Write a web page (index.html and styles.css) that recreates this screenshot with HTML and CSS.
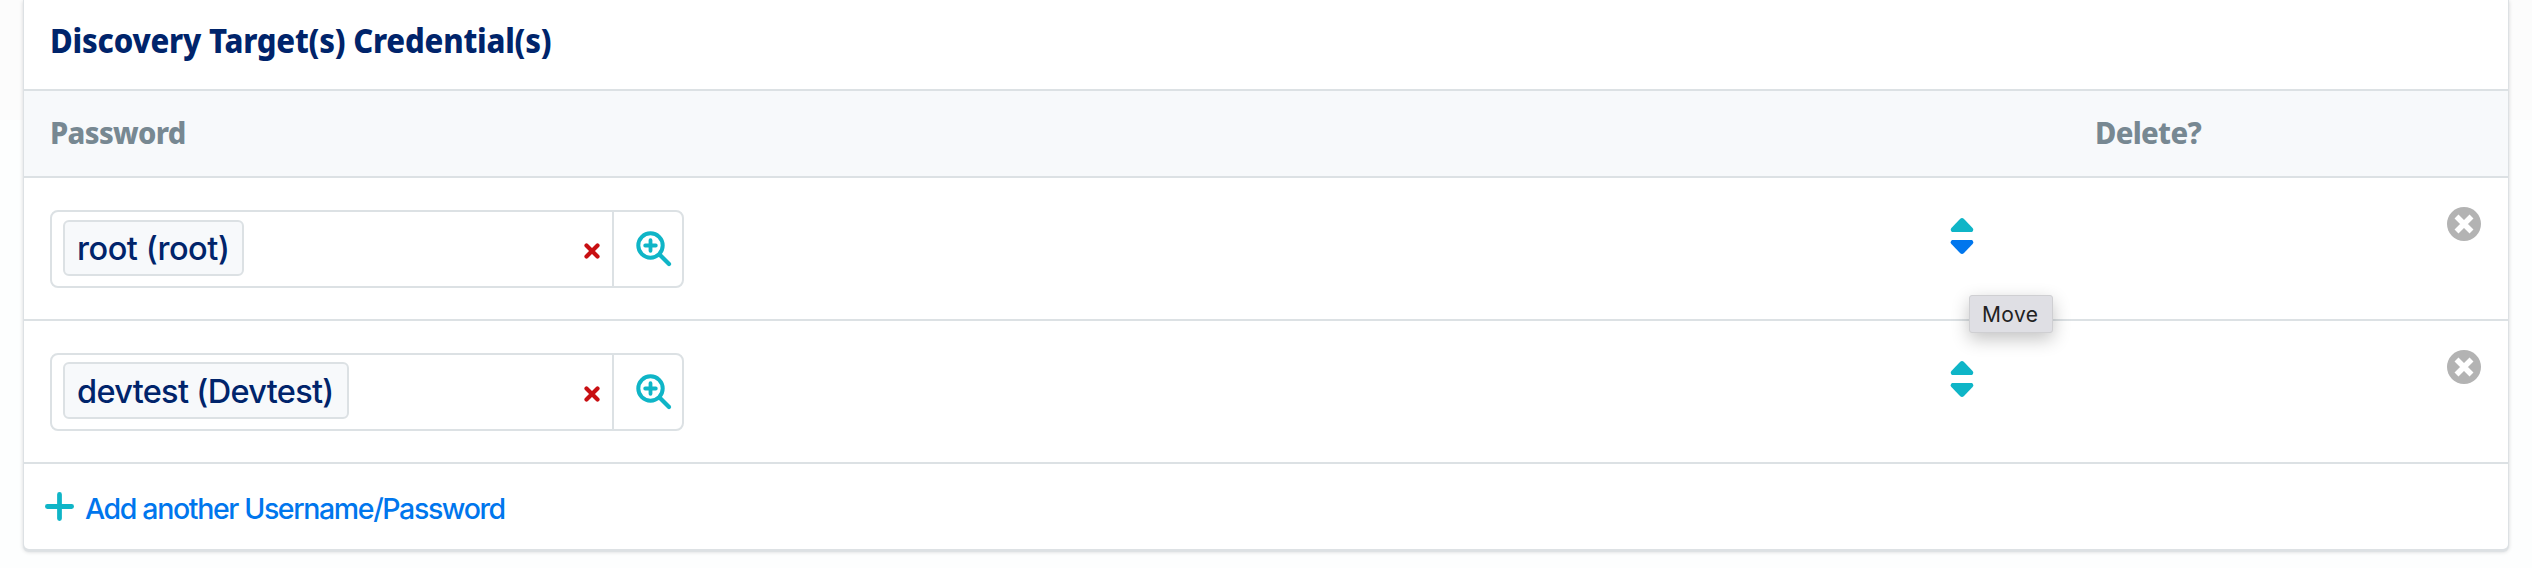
FILE: index.html
```html
<!DOCTYPE html>
<html lang="en">
<head>
<meta charset="utf-8">
<title>Discovery Target(s) Credential(s)</title>
<link rel="stylesheet" href="styles.css">
</head>
<body>
<svg class="defs" width="0" height="0" aria-hidden="true">
  <symbol id="clear" viewBox="0 0 16 16"><path d="M2.5 2.5 13.5 13.5M13.5 2.5 2.5 13.5" fill="none" stroke="#c80f12" stroke-width="4.2" stroke-linecap="round"/></symbol>
  <symbol id="lookup" viewBox="0 0 36 36"><g fill="none" stroke="#0fb5c7" stroke-linecap="round"><circle cx="14.5" cy="14.5" r="12.2" stroke-width="4"/><path d="M24 24 33 33" stroke-width="4.2"/><path d="M14.5 9.2V19.8M9.2 14.5H19.8" stroke-width="3.8"/></g></symbol>
  <symbol id="tri" viewBox="0 0 24 14"><path d="M10 .9Q12-.8 14 .9L22.6 10Q24.2 12.300 22 14H2Q-.2 12.300 1.400 10Z"/></symbol>
  <symbol id="remove" viewBox="0 0 36 36"><circle cx="18" cy="18" r="17" fill="#b3b3b3"/><path d="M10.500 10.500 25.500 25.500M25.500 10.500 10.500 25.500" fill="none" stroke="#fff" stroke-width="5.600"/></symbol>
</svg>
<main class="card">
  <h2 class="title"><span class="title-text">Discovery Target(s) Credential(s)</span></h2>
  <div class="grid head">
    <div><span class="head-text">Password</span></div>
    <div></div>
    <div><span class="head-text">Delete?</span></div>
  </div>
  <div class="grid row">
    <div class="field">
      <div class="value"><span class="chip chip-root">root (root)</span><svg class="clear"><use href="#clear"/></svg></div>
      <div class="lookup"><svg><use href="#lookup"/></svg></div>
    </div>
    <div class="move"><svg><use href="#tri"/></svg><svg class="down active"><use href="#tri"/></svg><span class="tooltip">Move</span></div>
    <div class="remove"><svg><use href="#remove"/></svg></div>
  </div>
  <div class="grid row">
    <div class="field">
      <div class="value"><span class="chip chip-dev">devtest (Devtest)</span><svg class="clear"><use href="#clear"/></svg></div>
      <div class="lookup"><svg><use href="#lookup"/></svg></div>
    </div>
    <div class="move"><svg><use href="#tri"/></svg><svg class="down"><use href="#tri"/></svg></div>
    <div class="remove"><svg><use href="#remove"/></svg></div>
  </div>
  <div class="add">
    <svg viewBox="0 0 28 28"><path d="M14 2.300V25.700M2.300 14H25.700" fill="none" stroke="#0fb5c7" stroke-width="4.600" stroke-linecap="round"/></svg>
    <a class="add-text">Add another Username/Password</a>
  </div>
</main>
</body>
</html>
```
FILE: styles.css
```css
* { box-sizing: border-box; }
body {
  margin: 0;
  height: 568px;
  overflow: hidden;
  padding: 0 24px;
  background: linear-gradient(#fcfcfc 120px, #fdfefe 120px);
  font-family: Inter, sans-serif;
}
.defs { display: block; }
svg { display: block; flex: none; }
.card {
  height: 549px;
  background: #fff;
  border-radius: 0 0 5px 5px;
  box-shadow: 0 0 0 1px #dde1e4, 0 2px 1px 1px #dde1e4, 0 2px 4px 1px rgba(0,0,0,.14);
}
.title {
  margin: 0;
  height: 91px;
  padding: 18px 26px 0;
  border-bottom: 2px solid #dce1e4;
  font: 800 33px/46px "Noto Sans", sans-serif;
  color: #00246b;
  white-space: nowrap;
}
.title-text, .head-text { display: inline-block; transform-origin: 0 50%; }
.title-text { transform: scaleX(.94); letter-spacing: -.22px; }
.head-text { transform: scaleX(.94); letter-spacing: -.7px; }
.grid { display: grid; grid-template-columns: 1926px 145px 1fr; border-bottom: 2px solid #dce1e4; }
.head {
  height: 87px;
  padding: 19px 0 0 0;
  background: #f7f9fb;
  font: 800 31px/44px "Noto Sans", sans-serif;
  color: #778892;
}
.head > div:first-child { padding-left: 26px; }
.row { height: 143px; }
.field {
  display: flex;
  width: 634px;
  height: 78px;
  margin: 32px 0 0 26px;
  border: 2px solid #dce1e4;
  border-radius: 8px;
}
.value { display: flex; justify-content: space-between; flex: 1; padding: 8px 12px 0 11px; }
.chip {
  height: 56px;
  padding: 0 0 0 12px;
  border: 2px solid #dce1e4;
  border-radius: 6px;
  background: #f7f9fb;
  color: #00246b;
  font-size: 32.5px;
  font-weight: 500;
  line-height: 54px;
  white-space: nowrap;
}
.chip-root { width: 181px; letter-spacing: -.45px; }
.chip-dev { width: 286px; height: 57px; margin-top: -1px; line-height: 56px; letter-spacing: -.7px; }
.clear { width: 16px; height: 16px; margin-top: 23px; }
.lookup { width: 70px; border-left: 2px solid #dce1e4; padding: 19px 0 0 22px; }
.lookup svg { width: 36px; height: 36px; }
.move { position: relative; padding-top: 40px; }
.move svg { width: 24px; height: 14px; fill: #0fb5c7; }
.move .down { margin-top: 8px; transform: scaleY(-1); }
.move .active { fill: #0076ed; }
.tooltip {
  position: absolute;
  left: 19px;
  top: 117px;
  width: 84px;
  height: 38px;
  padding-left: 12px;
  border: 1px solid #cfcfd2;
  border-radius: 3px;
  background: #dfdfe4;
  box-shadow: 0 6px 18px rgba(0,0,0,.24);
  color: #222;
  font: 400 21px/37px Inter, sans-serif;
  letter-spacing: .4px;
}
.remove { display: flex; justify-content: flex-end; padding: 28px 26px 0 0; }
.remove svg { width: 36px; height: 36px; }
.add { display: flex; gap: 11px; padding: 28px 0 0 21px; color: #0076ed; font-size: 28.5px; font-weight: 500; letter-spacing: -1.37px; line-height: 34px; white-space: nowrap; }
.add svg { width: 29px; height: 29px; }
```
